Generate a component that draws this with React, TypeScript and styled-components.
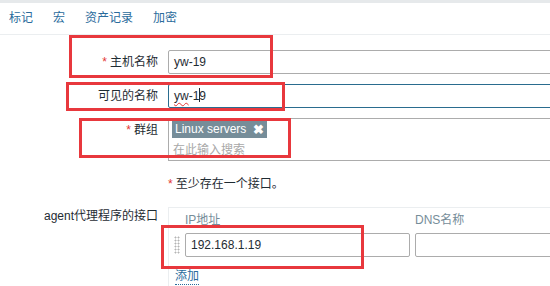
import React from "react";
import styled, { createGlobalStyle } from "styled-components";

const Global = createGlobalStyle`
  html, body { margin: 0; padding: 0; background: #fff; overflow: hidden; }
  body {
    font-family: "Liberation Sans", Arial, "Noto Sans CJK SC", sans-serif;
    font-size: 12px;
    color: #1f2c33;
  }
  #root { width: 550px; height: 286px; overflow: hidden; position: relative; }
`;

const TopStrip = styled.div`
  height: 3px;
  background: #e6e9eb;
`;

const TabBar = styled.nav`
  height: 31px;
  display: flex;
  align-items: center;
  gap: 20px;
  padding-left: 9px;
  border-bottom: 1px solid #ebeef0;
`;

const Tab = styled.span`
  color: #2a6b9c;
  font-size: 12px;
  line-height: 31px;
`;

const Form = styled.div`
  padding-top: 15px;
  display: grid;
  grid-template-columns: 158px 382px;
  column-gap: 10px;
  row-gap: 10px;
`;

const Label = styled.div<{ $lh?: number }>`
  text-align: right;
  line-height: ${(p) => p.$lh ?? 24}px;
  white-space: nowrap;
`;

const Star = styled.span`
  color: #e33734;
  margin-right: 3px;
`;

const Field = styled.div`
  min-width: 0;
  overflow: hidden;
`;

const TextInput = styled.div<{ $focus?: boolean; $w?: number }>`
  box-sizing: border-box;
  width: ${(p) => p.$w ?? 453}px;
  flex: none;
  height: 24px;
  border: 1px solid ${(p) => (p.$focus ? "#2a6c8f" : "#acacac")};
  border-radius: 2px;
  padding: 0 5px;
  line-height: 22px;
  font-size: 12px;
  white-space: nowrap;
  background: #fff;
  color: #1f2c33;
`;

const Misspelled = styled.span`
  text-decoration: underline wavy #e33734;
  text-decoration-thickness: 1px;
  text-underline-offset: 2px;
`;

const Caret = styled.span`
  display: inline-block;
  width: 1px;
  height: 14px;
  background: #1f2c33;
  vertical-align: -2px;
  margin: 0 -0.5px;
`;

const MultiSelect = styled.div`
  box-sizing: border-box;
  width: 453px;
  border: 1px solid #acacac;
  padding: 2px 3px 0;
  display: flex;
  flex-direction: column;
  gap: 2px;
`;

const Tag = styled.span`
  align-self: flex-start;
  height: 17px;
  line-height: 17px;
  background: #768d99;
  color: #fff;
  padding: 0 3px;
  font-size: 12px;
  display: inline-flex;
  align-items: center;
  gap: 7px;
`;

const TagClose = styled.span`
  font-weight: bold;
  font-size: 13px;
`;

const Placeholder = styled.div`
  line-height: 20px;
  color: #a8a8a8;
  padding-left: 1px;
`;

const Note = styled.div`
  line-height: 26px;
  grid-column: 2;
`;

const IfaceBox = styled.div`
  box-sizing: border-box;
  width: 453px;
  border: 1px solid #ebeef0;
  padding-bottom: 12px;
`;

const IfaceHeader = styled.div`
  display: flex;
  padding-left: 16px;
  line-height: 24px;
  color: #768d99;
`;

const HeaderCell = styled.span<{ $w: number }>`
  width: ${(p) => p.$w}px;
`;

const IfaceRow = styled.div`
  display: flex;
  align-items: center;
  gap: 5px;
  margin-top: 1px;
  padding-left: 5px;
`;

const Handle = styled.span`
  width: 6px;
  height: 18px;
  background-image: radial-gradient(circle, #b4b4b4 0.9px, transparent 1.1px);
  background-size: 3px 3px;
`;

const AddLink = styled.a`
  display: inline-block;
  margin: 11px 0 0 6px;
  color: #2a6b9c;
  line-height: 16px;
  text-decoration: none;
  border-bottom: 1px dotted #2a6b9c;
`;

const Annot = styled.div`
  position: absolute;
  box-sizing: border-box;
  border: 3px solid #e8383d;
  pointer-events: none;
`;

const boxes = [
  { left: 69, top: 35, width: 204, height: 43 },
  { left: 66, top: 82, width: 219, height: 29 },
  { left: 79, top: 118, width: 212, height: 40 },
  { left: 161, top: 225, width: 203, height: 44 },
];

export default function App() {
  return (
    <>
      <Global />
      <TopStrip />
      <TabBar>
        <Tab>标记</Tab>
        <Tab>宏</Tab>
        <Tab>资产记录</Tab>
        <Tab>加密</Tab>
      </TabBar>
      <Form>
        <Label>
          <Star>*</Star>主机名称
        </Label>
        <Field>
          <TextInput>yw-19</TextInput>
        </Field>

        <Label>可见的名称</Label>
        <Field>
          <TextInput $focus>
            <Misspelled>yw</Misspelled>-1<Caret />9
          </TextInput>
        </Field>

        <Label>
          <Star>*</Star>群组
        </Label>
        <Field>
          <MultiSelect>
            <Tag>
              Linux servers<TagClose>✖</TagClose>
            </Tag>
            <Placeholder>在此输入搜索</Placeholder>
          </MultiSelect>
        </Field>

        <Note>
          <Star>*</Star>至少存在一个接口。
        </Note>

        <Label $lh={18}>agent代理程序的接口</Label>
        <Field>
          <IfaceBox>
            <IfaceHeader>
              <HeaderCell $w={230}>IP地址</HeaderCell>
              <HeaderCell $w={200}>DNS名称</HeaderCell>
            </IfaceHeader>
            <IfaceRow>
              <Handle />
              <TextInput $w={225}>192.168.1.19</TextInput>
              <TextInput $w={200} />
            </IfaceRow>
            <AddLink>添加</AddLink>
          </IfaceBox>
        </Field>
      </Form>
      {boxes.map((b, i) => (
        <Annot key={i} style={b} />
      ))}
    </>
  );
}
